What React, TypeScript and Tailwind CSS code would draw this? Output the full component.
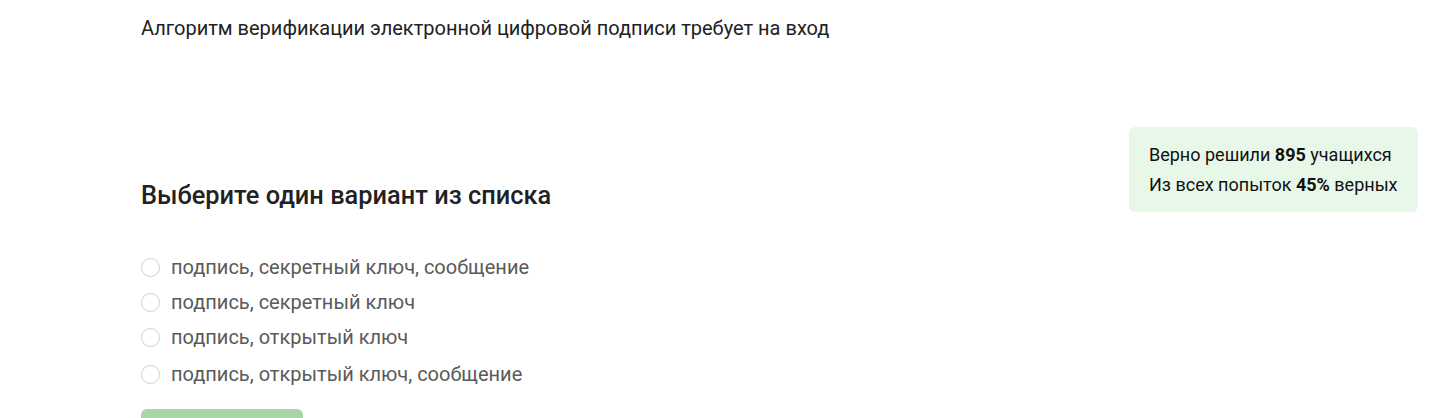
const options = [
  "подпись, секретный ключ, сообщение",
  "подпись, секретный ключ",
  "подпись, открытый ключ",
  "подпись, открытый ключ, сообщение",
];

const Radio = ({ label }: { label: string }) => (
  <label className="flex h-[35px] items-center gap-[11px]">
    <span className="h-[19px] w-[19px] shrink-0 rounded-full border border-[#cfcfcf] bg-white" />
    <span className="text-[20px] leading-[27px] text-[#5a5a5a]">{label}</span>
  </label>
);

export default function App() {
  return (
    <div
      className="flex h-[418px] w-full overflow-hidden bg-white"
      style={{ fontFamily: "Roboto, 'Noto Sans', sans-serif" }}
    >
      <div className="flex-1 pl-[141px] pt-[15px]">
        <p className="text-[20px] leading-[27px] text-[#222]">
          Алгоритм верификации электронной цифровой подписи требует на вход
        </p>

        <h2 className="mt-[139px] text-[25.4px] font-medium leading-[28px] text-[#222]">
          Выберите один вариант из списка
        </h2>

        <div className="mt-[41px] flex flex-col">
          {options.map((o, i) => (
            <div key={o} className={i === 3 ? "mt-[2px]" : ""}>
              <Radio label={o} />
            </div>
          ))}
        </div>

        <button className="mt-[17px] h-[40px] w-[162px] rounded-[6px] bg-[#a9d6a9]" />
      </div>

      <aside className="mr-[24px] mt-[127px] h-[85px] w-[289px] rounded-[6px] bg-[#e8f8e8] px-[20px] py-[13px] text-[18px] leading-[30px] text-[#111]">
        <p>
          Верно решили <b className="font-bold">895</b> учащихся
        </p>
        <p>
          Из всех попыток <b className="font-bold">45%</b> верных
        </p>
      </aside>
    </div>
  );
}
